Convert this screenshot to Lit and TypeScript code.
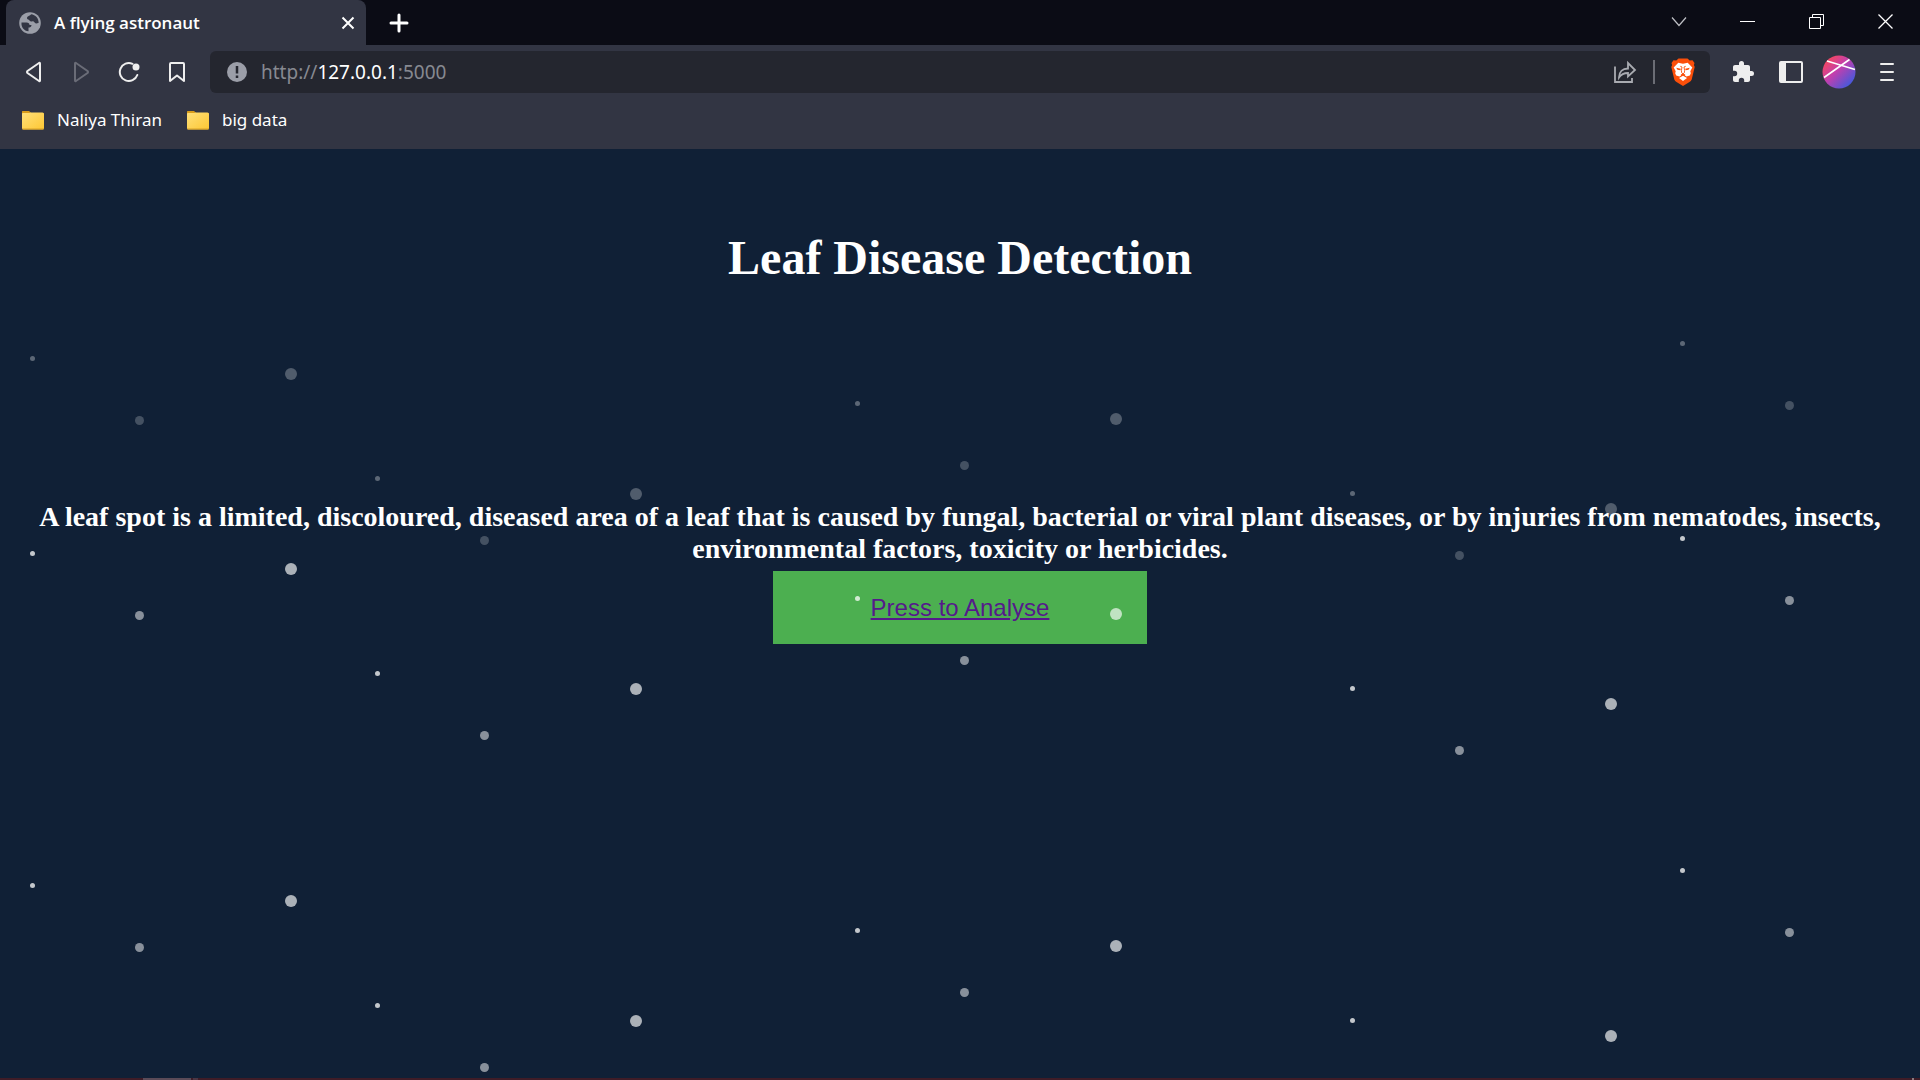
import { LitElement, html, svg, css } from "lit";
import { customElement } from "lit/decorators.js";

type Star = { x: number; y: number; r: number; o: number };

/* Each cluster holds a small, a large and a medium star. */
const CLUSTERS = [[32, 358], [377, 478], [857, 403], [1352, 493], [1682, 343]];
const LAYERS = [
  { dy: 0, small: 0.32, medium: 0.22, large: 0.27 },
  { dy: 195, small: 0.75, medium: 0.5, large: 0.65 },
  { dy: 527, small: 0.75, medium: 0.5, large: 0.65 },
];
const PAGE_TOP = 149;
const STARS: Star[] = LAYERS.flatMap((l) =>
  CLUSTERS.flatMap(([x, y]) => [
    { x: x, y: y + l.dy - PAGE_TOP, r: 2.5, o: l.small },
    { x: x + 107, y: y + 62 + l.dy - PAGE_TOP, r: 4.5, o: l.medium },
    { x: x + 258.5, y: y + 15.5 + l.dy - PAGE_TOP, r: 6, o: l.large },
  ])
);

const FOLDER = html`<svg width="24" height="20" viewBox="0 0 24 20" aria-hidden="true">
  <defs><linearGradient id="f" x1="0" y1="0" x2="1" y2="1"><stop offset="0" stop-color="#ffe07a" /><stop offset="1" stop-color="#fdc733" /></linearGradient></defs>
  <path d="M1 2q0-1 1-1h6l2 2h12q1 0 1 1v4H1z" fill="#d99d1c" />
  <rect x="1" y="2.500" width="22" height="17" rx="1.500" fill="url(#f)" />
  <path d="M1 1.500h7l1.500 1.500H1z" fill="#d99d1c" />
  <path d="M1.500 19h21" stroke="#d9a127" />
</svg>`;

@customElement("browser-tabs")
class BrowserTabs extends LitElement {
  static styles = css`
    :host { display: flex; height: 45px; background: #0b0c15; color: #fff; padding-left: 6px; justify-content: space-between; }
    .left, .right { display: flex; }
    button { border: 0; padding: 0; background: none; color: inherit; display: flex; align-items: center; justify-content: center; }
    .tab { display: flex; align-items: center; width: 360px; box-sizing: border-box; padding: 0 7px 0 13px; gap: 13px; background: #323543; border-radius: 8px 8px 0 0; }
    .title { flex: 1; font: 600 17px/24px "Open Sans", "Noto Sans", sans-serif; }
    .close { width: 22px; height: 28px; }
    .add { width: 66px; }
    .win { width: 69px; height: 43px; }
  `;
  render() {
    return html`<div class="left">
        <div class="tab">
          <svg width="22" height="22" viewBox="0 0 22 22" aria-hidden="true">
            <circle cx="11" cy="11" r="10.800" fill="#9b9ea8" />
            <path d="M2.500 10.500h5c2 0 3 1 3 2.500h2c0 2-1.500 2.500-3 2.500v3.800C5 19 2 15 2.500 10.500zM12 2.300c-1 2-4 1.500-4 4 0 1.500 2 1 2.500 2.200.5 1 2 1.300 3 .7 1.500-.5 2 1.800 3.500 2.200 1 .3 1.500-.7 2.600-.4C19.800 6.500 16.500 2.800 12 2.300z" fill="#323543" />
          </svg>
          <span class="title">A flying astronaut</span>
          <button class="close" aria-label="Close tab"><svg width="14" height="14" viewBox="0 0 14 14"><path d="M1.500 1.500l11 11m0-11l-11 11" stroke="#fff" stroke-width="2" /></svg></button>
        </div>
        <button class="add" aria-label="New tab"><svg width="20" height="20" viewBox="0 0 20 20"><path d="M10 2v16M2 10h16" stroke="#fff" stroke-width="3" stroke-linecap="round" /></svg></button>
      </div>
      <div class="right">
        <button class="win" aria-label="Search tabs"><svg width="16" height="10" viewBox="0 0 16 10"><path d="M1 .5l7 8 7-8" fill="none" stroke="#bfc0c5" stroke-width="1.200" /></svg></button>
        <button class="win" aria-label="Minimize"><svg width="15" height="15" viewBox="0 0 15 15"><path d="M0 7.500h15" stroke="#fff" /></svg></button>
        <button class="win" aria-label="Restore"><svg width="15" height="15" viewBox="0 0 15 15" fill="none" stroke="#fff"><path d="M.5 3.500h11v11H.5zM3.500 3V.5h11v11H12" /></svg></button>
        <button class="win" aria-label="Close"><svg width="15" height="15" viewBox="0 0 15 15"><path d="M.5.500l14 14m0-14l-14 14" stroke="#fff" stroke-width="1.300" /></svg></button>
      </div>`;
  }
}

@customElement("browser-toolbar")
class BrowserToolbar extends LitElement {
  static styles = css`
    :host { display: block; background: #323543; color: #fff; font: 19px/24px "Noto Sans", sans-serif; }
    .bar { display: flex; align-items: center; padding: 6px 9px 5px 9px; }
    button { border: 0; padding: 0; background: none; display: flex; align-items: center; justify-content: center; width: 48px; height: 42px; flex: none; }
    .address { flex: 1; display: flex; align-items: center; height: 42px; margin: 0 9px; background: #24262f; border-radius: 6px; padding: 0 3px 0 17px; box-sizing: border-box; }
    .url { flex: 1; position: relative; display: flex; margin-left: 14px; }
    .url input { position: absolute; inset: 0; width: 100%; border: 0; padding: 0; background: none; color: transparent; font: inherit; outline: 0; }
    .dim { color: #878991; }
    .divider { width: 2px; height: 24px; background: #6b6d75; margin: 0 4px; }
    .marks { display: flex; gap: 24px; padding: 12px 20px 19px 21px; height: 20px; align-items: center; font-size: 17px; }
    .marks a { display: flex; align-items: center; gap: 12px; color: #fff; text-decoration: none; }
  `;
  render() {
    return html`<nav class="bar" aria-label="Browser controls">
        <button aria-label="Back"><svg width="18" height="22" viewBox="0 0 18 22"><path d="M16 2.500v17q0 1-1 .5L3.500 12q-1-1 0-2L15 2q1-.5 1 .5z" fill="none" stroke="#eee" stroke-width="2" /></svg></button>
        <button aria-label="Forward"><svg width="18" height="22" viewBox="0 0 18 22"><path d="M3 2.500v17q0 1 1 .5L15.500 12q1-1 0-2L4 2q-1-.5-1 .5z" fill="none" stroke="#6a6c77" stroke-width="2" /></svg></button>
        <button aria-label="Reload"><svg width="22" height="22" viewBox="0 0 22 22"><path d="M14.500 2.800A9 9 0 1 0 19.300 14" fill="none" stroke="#eee" stroke-width="2" stroke-linecap="round" /><circle cx="18" cy="6" r="3.500" fill="#eee" /></svg></button>
        <button aria-label="Bookmark this page"><svg width="18" height="22" viewBox="0 0 18 22"><path d="M3 2h12q1 0 1 1v17l-7-5.500L2 20V3q0-1 1-1z" fill="none" stroke="#eee" stroke-width="2" stroke-linejoin="round" /></svg></button>
        <div class="address">
          <svg width="20" height="20" viewBox="0 0 20 20" aria-hidden="true"><circle cx="10" cy="10" r="10" fill="#9b9ea8" /><path d="M10 4v7.500M10 13.500v2.500" stroke="#24262f" stroke-width="2.500" /></svg>
          <div class="url"><span class="dim">http://</span><span>127.0.0.1</span><span class="dim">:5000</span><input aria-label="Address" /></div>
          <button aria-label="Share"><svg width="24" height="24" viewBox="0 0 24 24" fill="none" stroke="#a9abb1" stroke-width="1.800"><path d="M2 6.500V22h17v-4" /><path d="M6 17.500C6 12 9.500 8.500 15 8.500V3l7 7-7 6.500V13c-4 0-7 1.500-9 4.500z" /></svg></button>
          <span class="divider"></span>
          <button aria-label="Brave Shields">
            <svg width="24" height="28" viewBox="0 0 24 28"><path d="M7.500.5h9l2.200 2 2.800-.2 2 2.700-.6 2 .8 2-3 12.500Q20 23 18.500 24L12 28l-6.500-4Q4 23 3.300 21.500L.3 9l.8-2L.5 5l2-2.700 2.800.2z" fill="#fb4f0a" />
            <path d="M7.300 4.800l4.700.9 4.700-.9L21.300 9.600l-2 3.600.5 2-1 2.200-3.300 1-1.500-.8.2-1.200-2.200-.8-2.200.8.2 1.200-1.500.8-3.300-1-1-2.200.5-2-2-3.600z" fill="#fff" />
            <path d="M12 17.800l4 2.300-4 3-4-3z" fill="#fff" />
            <path d="M5.200 9.700l4.600 1-.4 1.500-2.900-.4zM18.800 9.700l-4.600 1 .4 1.500 2.900-.4z" fill="#fb4f0a" />
            <path d="M9.300 8.300l1.700.7-.6 3.500.3 2.300L12 16l1.300-1.200.3-2.300L13 9l1.700-.7" fill="none" stroke="#fb4f0a" stroke-width=".9" /></svg>
          </button>
        </div>
        <button aria-label="Extensions"><svg width="24" height="24" viewBox="0 0 24 24" fill="#eee"><path d="M20.500 11H19V7c0-1.100-.9-2-2-2h-4V3.500a2.500 2.500 0 0 0-5 0V5H4c-1.100 0-2 .9-2 2v3.800h1.500a2.700 2.700 0 0 1 0 5.400H2V20c0 1.100.9 2 2 2h3.800v-1.500a2.700 2.700 0 0 1 5.400 0V22H17c1.100 0 2-.9 2-2v-4h1.500a2.500 2.500 0 0 0 0-5z" /></svg></button>
        <button aria-label="Sidebar"><svg width="24" height="22" viewBox="0 0 24 22"><rect x="1" y="1" width="22" height="20" rx="1" fill="none" stroke="#eee" stroke-width="2" /><path d="M1 1h6v20H1z" fill="#eee" /></svg></button>
        <button aria-label="Profile"><svg width="34" height="34" viewBox="0 0 34 34"><defs><linearGradient id="p" x1="0" y1="0" x2="1" y2="1"><stop offset=".1" stop-color="#fb4858" /><stop offset=".45" stop-color="#c13fae" /><stop offset=".9" stop-color="#3a5be0" /></linearGradient></defs><circle cx="17" cy="17" r="16.500" fill="url(#p)" /><path d="M2 22.500L27.500 4.500M5 6l28 8.500" stroke="#fff" stroke-width="1.600" /></svg></button>
        <button aria-label="Menu"><svg width="14" height="20" viewBox="0 0 14 20"><path d="M1 2h12M1 10h12M1 18h12" stroke="#eee" stroke-width="2" stroke-linecap="round" /></svg></button>
      </nav>
      <nav class="marks" aria-label="Bookmarks">
        <a href="#">${FOLDER}<span>Naliya Thiran</span></a>
        <a href="#">${FOLDER}<span>big data</span></a>
      </nav>`;
  }
}

@customElement("leaf-page")
class LeafPage extends LitElement {
  static styles = css`
    :host { display: block; position: relative; overflow: hidden; background: #102036; color: #fff; text-align: center; font-family: "Liberation Serif", serif; }
    h1 { margin: 0; padding-top: 80px; font-size: 48px; line-height: 58px; }
    h2 { margin: 0; padding: 214px 20px 0; font-size: 28px; line-height: 32px; }
    .analyse { display: block; width: fit-content; margin: 6px auto 0; padding: 22px 98px; background: #4caf50; color: #551a8b; font: 24px/29px "Liberation Sans", Arial, sans-serif; text-decoration: underline; }
    .stars { position: absolute; top: 0; left: 0; width: 100%; height: 100%; pointer-events: none; }
    .edge { position: absolute; left: 0; right: 0; bottom: 0; height: 2px; display: flex; background: #3f1c27; }
    .seg { width: 48px; margin-left: 143px; background: #5b4b58; }
    .tip { width: 5px; margin-left: 2px; background: #4b3644; }
    .end { width: 2px; margin: 0 6px 0 auto; background: #8a7b80; }
  `;
  render() {
    return html`<h1>Leaf Disease Detection</h1>
      <h2>A leaf spot is a limited, discoloured, diseased area of a leaf that is caused by fungal, bacterial or viral plant diseases, or by injuries from nematodes, insects, environmental factors, toxicity or herbicides.</h2>
      <a class="analyse" href="#">Press to Analyse</a>
      <svg class="stars" aria-hidden="true">
        ${STARS.map((s) => svg`<circle cx=${s.x + 0.5} cy=${s.y + 0.5} r=${s.r} fill="#fff" fill-opacity=${s.o} />`)}
      </svg>
      <div class="edge"><span class="seg"></span><span class="tip"></span><span class="end"></span></div>`;
  }
}

@customElement("app-root")
class AppRoot extends LitElement {
  static styles = css`
    :host { display: flex; flex-direction: column; min-height: 100vh; }
    leaf-page { flex: 1; }
  `;
  render() {
    return html`<browser-tabs></browser-tabs><browser-toolbar></browser-toolbar><leaf-page></leaf-page>`;
  }
}
